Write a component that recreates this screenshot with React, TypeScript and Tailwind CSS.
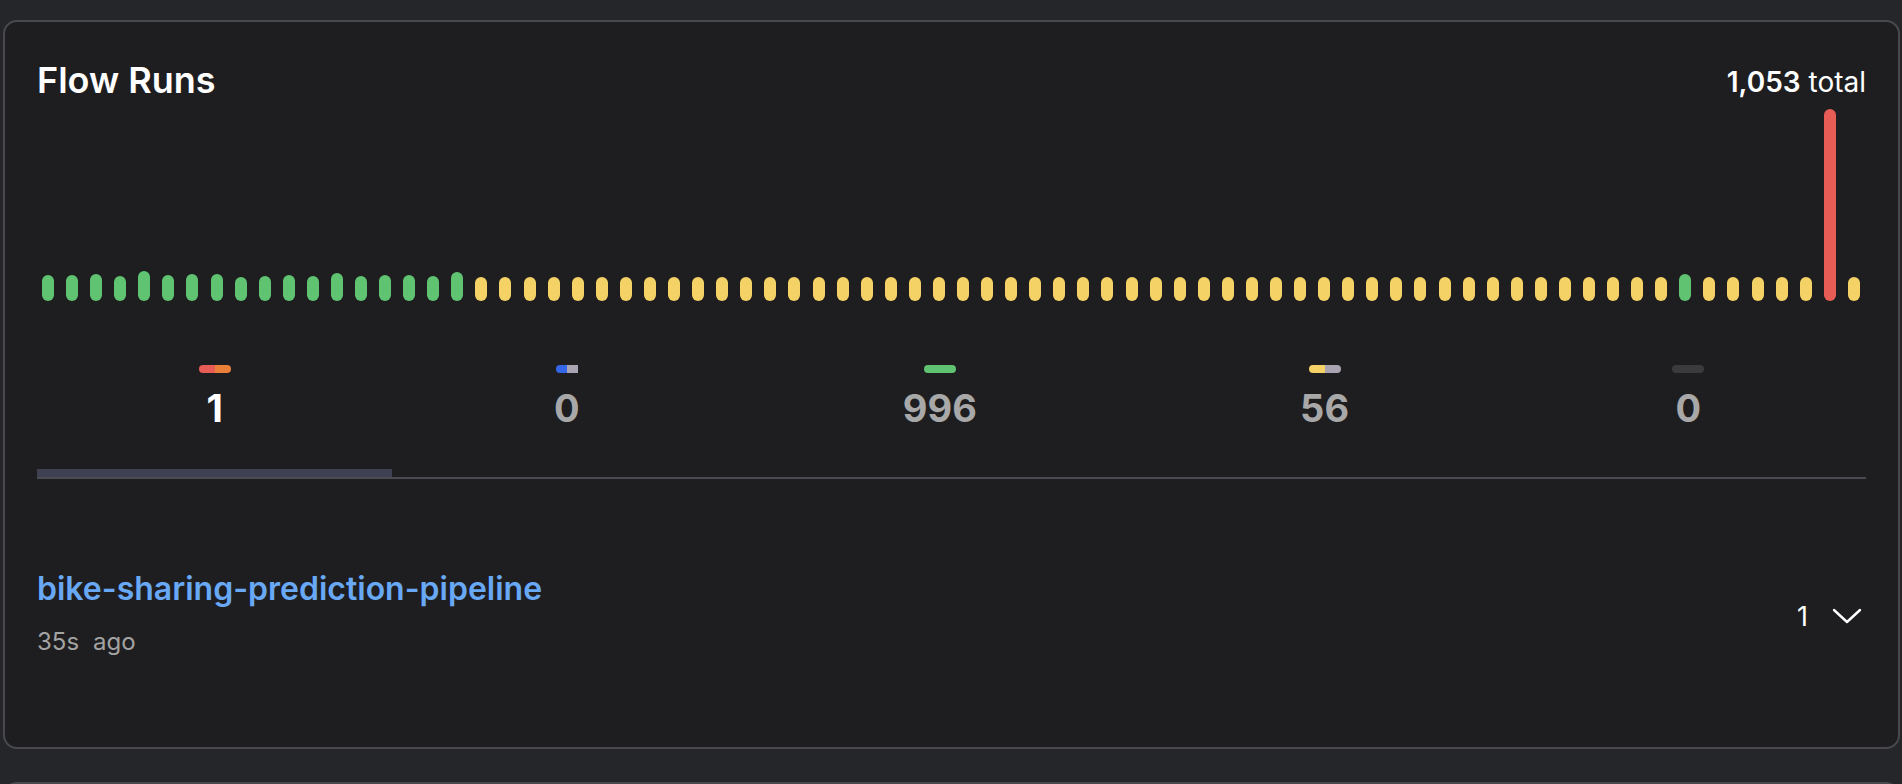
type Bar = { h: number; c: string };

const GREEN = "bg-[#5fc372]";
const YELLOW = "bg-[#f5d266]";
const RED = "bg-[#e85c56]";

const greenHeights = [26, 26, 27, 25, 30, 26, 27, 27, 24, 25, 26, 25, 28, 25, 26, 26, 25, 29];

const bars: Bar[] = [
  ...greenHeights.map((h) => ({ h, c: GREEN })),
  ...Array.from({ length: 50 }, () => ({ h: 24, c: YELLOW })),
  { h: 27, c: GREEN },
  ...Array.from({ length: 5 }, () => ({ h: 24, c: YELLOW })),
  { h: 192, c: RED },
  { h: 24, c: YELLOW },
];

const stats = [
  { value: "1", active: true, colors: ["bg-[#e85c56]", "bg-[#ea7f3a]"], w: "w-[32px]", rounded: "rounded-full" },
  { value: "0", active: false, colors: ["bg-[#3366e8]", "bg-[#aaa4b2]"], w: "w-[22px]", rounded: "rounded-l-full" },
  { value: "996", active: false, colors: ["bg-[#5fc372]"], w: "w-[32px]", rounded: "rounded-full" },
  { value: "56", active: false, colors: ["bg-[#f5d266]", "bg-[#aaa4b2]"], w: "w-[32px]", rounded: "rounded-full" },
  { value: "0", active: false, colors: ["bg-[#3b3b3e]"], w: "w-[32px]", rounded: "rounded-full" },
];

export default function App() {
  return (
    <div
      className="h-[784px] overflow-hidden bg-[#252629] pt-[20px] pl-[3px] pr-[2px]"
      style={{ fontFamily: "Inter, 'Noto Sans', sans-serif" }}
    >
      <div className="h-[729px] rounded-[14px] border-2 border-[#48484d] bg-[#1e1e20] px-8 pt-[40px]">
        <div className="flex items-start justify-between">
          <h2 className="text-[36px] leading-[36px] font-semibold text-white">Flow Runs</h2>
          <div className="mt-[7px] text-[28px] leading-[27px] text-white">
            <span className="font-semibold">1,053</span> total
          </div>
        </div>

        <div className="mt-[3px] flex h-[200px] items-end justify-between px-[5px]">
          {bars.map((b, i) => (
            <div key={i} className={`w-3 rounded-full ${b.c}`} style={{ height: b.h }} />
          ))}
        </div>

        <div className="mt-[64px] flex border-b-2 border-[#4a4a52]">
          {stats.map((s, i) => (
            <div key={i} className="flex flex-auto flex-col">
              <div className="flex flex-col items-center">
                <div className={`flex h-2 overflow-hidden ${s.w} ${s.rounded}`}>
                  {s.colors.map((c, j) => (
                    <div key={j} className={`h-full flex-1 ${c}`} />
                  ))}
                </div>
                <div
                  className={`mt-4 text-[38px] leading-[38px] font-bold ${s.active ? "text-white" : "text-[#a8a8a8]"}`}
                >
                  {s.value}
                </div>
              </div>
              <div className="h-[42px]" />
              <div className={`h-2 ${s.active ? "bg-[#3e4152]" : ""}`} />
            </div>
          ))}
        </div>

        <div className="mt-[94px] flex items-center justify-between pr-[4px]">
          <div className="flex flex-col">
            <a className="text-[32px] leading-[32px] font-semibold text-[#68a8f4]">
              bike-sharing-prediction-pipeline
            </a>
            <div className="mt-[25px] flex gap-[14px] text-[24px] leading-[24px] text-[#a3a3a3]">
              <span>35s</span>
              <span>ago</span>
            </div>
          </div>
          <div className="flex items-center gap-[24px] pt-[5px] text-white">
            <span className="text-[27px] leading-[27px]">1</span>
            <svg width="30" height="16" viewBox="0 0 30 16" fill="none" stroke="currentColor" strokeWidth="2.4" strokeLinecap="round" strokeLinejoin="round">
              <polyline points="2,2 15,14 28,2" />
            </svg>
          </div>
        </div>
      </div>
      <div className="mt-[33px] h-10 rounded-t-[14px] border-2 border-[#48484d] bg-[#1e1e20]" />
    </div>
  );
}
